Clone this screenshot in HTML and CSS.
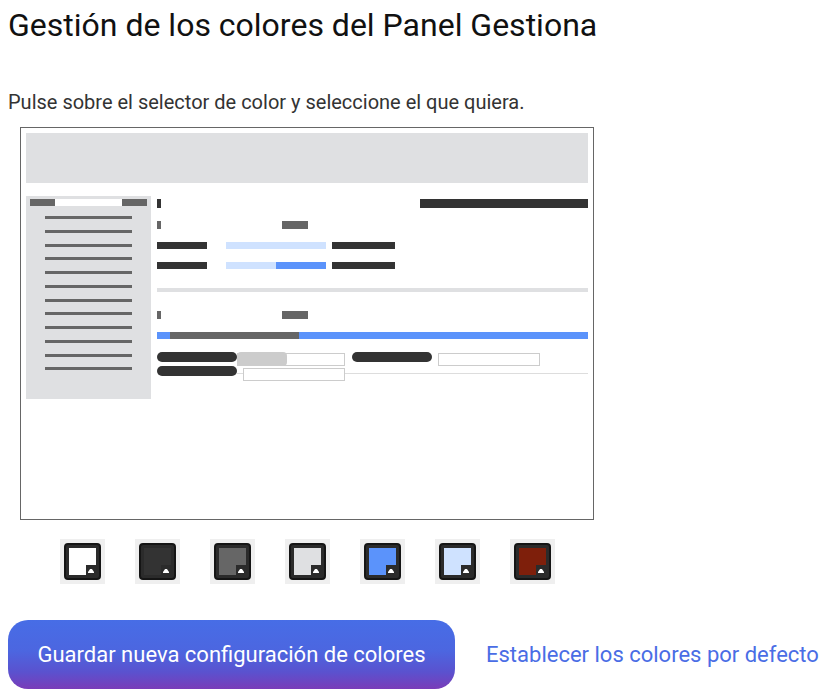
FILE: index.html
```html
<!DOCTYPE html>
<html lang="es">
<head>
    <meta charset="UTF-8">
    <meta name="viewport" content="width=device-width, initial-scale=1.0">
    <title>Gestión de los colores</title>
    <link rel="stylesheet" href="styles.css">
</head>
<body>
    <h1>Gestión de los colores del Panel Gestiona</h1>
    <p class="hint">Pulse sobre el selector de color y seleccione el que quiera.</p>

    <div class="preview">
        <div class="pv-header"></div>
        <div class="pv-body">
            <div class="pv-sidebar">
                <div class="pv-sidebar-top">
                    <span class="bar mid w25"></span>
                    <span class="bar white w67"></span>
                    <span class="bar mid w25"></span>
                </div>
                <div class="pv-menu">
                    <span></span><span></span><span></span><span></span>
                    <span></span><span></span><span></span><span></span>
                    <span></span><span></span><span></span><span></span>
                </div>
            </div>

            <div class="pv-main">
                <div class="row r1">
                    <span class="tick dark"></span>
                    <span class="bar dark wide-right"></span>
                </div>
                <div class="row r2">
                    <span class="tick mid"></span>
                    <span class="bar mid w26 push-125"></span>
                </div>
                <div class="row r3">
                    <span class="bar dark w50"></span>
                    <span class="bar light w100 gap19"></span>
                    <span class="bar dark w63 gap6"></span>
                </div>
                <div class="row r4">
                    <span class="bar dark w50"></span>
                    <span class="bar light w50 gap19"></span>
                    <span class="bar blue w50"></span>
                    <span class="bar dark w63 gap6"></span>
                </div>
                <div class="sep"></div>
                <div class="row r5">
                    <span class="tick mid"></span>
                    <span class="bar mid w26 push-125"></span>
                </div>
                <div class="row r6">
                    <span class="bar blue w13"></span>
                    <span class="bar mid w129"></span>
                    <span class="bar blue grow"></span>
                </div>
                <div class="form">
                    <div class="form-row first">
                        <span class="pill dark"></span>
                        <span class="field">
                            <span class="pill soft"></span>
                        </span>
                        <span class="pill dark gap7"></span>
                        <span class="field w102 gap6"></span>
                    </div>
                    <div class="form-row second">
                        <span class="pill dark"></span>
                        <span class="field w102 gap6"></span>
                    </div>
                </div>
            </div>
        </div>
    </div>

    <div class="swatches">
        <div class="swatch"><div class="chip" style="--c: #ffffff"><span class="notch"></span></div></div>
        <div class="swatch"><div class="chip" style="--c: #333333"><span class="notch"></span></div></div>
        <div class="swatch"><div class="chip" style="--c: #666666"><span class="notch"></span></div></div>
        <div class="swatch"><div class="chip" style="--c: #dfe0e2"><span class="notch"></span></div></div>
        <div class="swatch"><div class="chip" style="--c: #5b93fb"><span class="notch"></span></div></div>
        <div class="swatch"><div class="chip" style="--c: #cfe2ff"><span class="notch"></span></div></div>
        <div class="swatch"><div class="chip" style="--c: #7e1f0b"><span class="notch"></span></div></div>
    </div>

    <div class="actions">
        <button class="save">Guardar nueva configuración de colores</button>
        <a href="#" class="reset">Establecer los colores por defecto</a>
    </div>
</body>
</html>
```

FILE: styles.css
```css
body {
    margin: 0;
    padding: 0 8px;
    font-family: Roboto, "Liberation Sans", sans-serif;
    background: #fff;
    color: #111;
}

h1 {
    margin: 5px 0 0;
    font-size: 32px;
    font-weight: 400;
    line-height: 40px;
    color: #111;
}

.hint {
    margin: 44px 0 0;
    font-size: 20px;
    line-height: 26px;
    color: #333;
}

/* miniature of the panel */
.preview {
    margin: 12px 0 0 12px;
    width: 562px;
    height: 381px;
    padding: 5px;
    border: 1px solid #666;
}

.pv-header {
    height: 50px;
    background: #dfe0e2;
}

.pv-body {
    display: flex;
    gap: 6px;
    margin-top: 13px;
}

.pv-sidebar {
    width: 125px;
    height: 203px;
    background: #dfe0e2;
    box-sizing: border-box;
    padding: 3px 4px;
}

.pv-sidebar-top {
    display: flex;
    height: 7px;
}

.pv-menu {
    display: flex;
    flex-direction: column;
    gap: 10.75px;
    margin: 10px 0 0 15px;
}

.pv-menu span {
    display: block;
    width: 87px;
    height: 3px;
    background: #666;
}

.pv-main {
    flex: 1;
}

.bar, .tick, .pill {
    display: block;
    flex: none;
}

.dark { background: #333; }
.mid { background: #666; }
.white { background: #fff; }
.light { background: #cfe2ff; }
.blue { background: #5b93fb; }

.w13 { width: 13px; }
.w25 { width: 25px; }
.w26 { width: 26px; }
.w50 { width: 50px; }
.w63 { width: 63px; }
.w67 { width: 67px; }
.w100 { width: 100px; }
.w129 { width: 129px; }
.grow { flex: 1; }
.gap19 { margin-left: 19px; }
.gap6 { margin-left: 6px; }
.gap7 { margin-left: 7px; }
.push-125 { margin-left: 121px; }

.row {
    display: flex;
}

.tick {
    width: 4px;
}

.r1 { margin-top: 3px; height: 9px; }
.r1 .wide-right { width: 168px; margin-left: auto; }

.r2 { margin-top: 13px; height: 8px; }

.r3 { margin-top: 13px; height: 7px; }
.r4 { margin-top: 13px; height: 7px; }

.sep {
    margin-top: 19px;
    height: 4px;
    background: #dfe0e2;
}

.r5 { margin-top: 19px; height: 8px; }
.r6 { margin-top: 13px; height: 7px; }

.form {
    margin-top: 13px;
    position: relative;
}

.form-row {
    display: flex;
    align-items: flex-start;
    height: 14px;
}

.form::after {
    content: '';
    position: absolute;
    left: 80px;
    right: 0;
    top: 21px;
    height: 1px;
    background: #ddd;
}

.pill {
    width: 80px;
    height: 10px;
    border-radius: 5px;
}

.pill.soft {
    width: 50px;
    height: 14px;
    border-radius: 4px;
    background: #ccc;
}

.field {
    display: block;
    position: relative;
    z-index: 1;
    box-sizing: border-box;
    width: 108px;
    height: 13px;
    margin-top: 1px;
    border: 1px solid #ccc;
    background: #fff;
}

.field .pill.soft {
    position: absolute;
    left: -1px;
    top: -2px;
}

.field.w102 { width: 102px; }
.form-row.second .field { margin-top: 2px; }

/* colour pickers */
.swatches {
    display: flex;
    gap: 30px;
    margin: 19px 0 0 52px;
}

.swatch {
    width: 45px;
    height: 45px;
    background: #efefef;
    padding: 4px;
    box-sizing: border-box;
}

.chip {
    position: relative;
    width: 37px;
    height: 37px;
    box-sizing: border-box;
    border: 2px solid #151515;
    border-radius: 4px;
    background: #2b2b2b;
    padding: 3px;
}

.chip::before {
    content: '';
    display: block;
    width: 27px;
    height: 27px;
    background: var(--c);
}

.notch {
    position: absolute;
    right: 3px;
    bottom: 3px;
    width: 10px;
    height: 10px;
    background: #2b2b2b;
}

.notch::after {
    content: '';
    position: absolute;
    left: 2px;
    top: 4px;
    width: 6px;
    height: 4px;
    background: #fff;
    clip-path: polygon(35% 0, 65% 0, 100% 75%, 100% 100%, 0 100%, 0 75%);
}

/* buttons */
.actions {
    display: flex;
    align-items: center;
    gap: 31px;
    margin-top: 36px;
}

.save {
    width: 447px;
    height: 69px;
    border: none;
    border-radius: 20px;
    background: linear-gradient(180deg, #476de6 0%, #4c66e0 45%, #5a52cf 75%, #7a3cb8 100%);
    color: #fff;
    font-family: Roboto, "Liberation Sans", sans-serif;
    font-size: 22px;
    cursor: pointer;
}

.reset {
    color: #4a6de5;
    font-size: 22px;
    text-decoration: none;
}
```
